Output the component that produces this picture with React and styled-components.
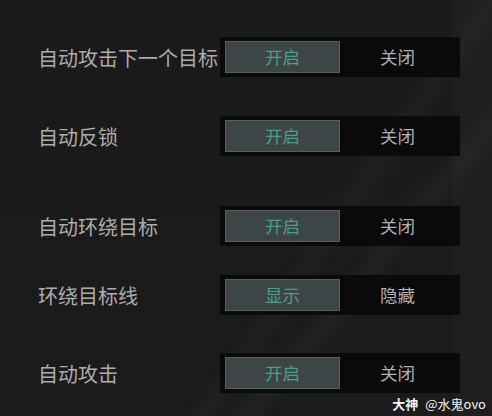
import styled, { createGlobalStyle } from "styled-components";

const GlobalStyle = createGlobalStyle`
  html, body {
    margin: 0;
    padding: 0;
    background: #1b1a1a;
  }
  body {
    font-family: "Noto Sans CJK SC", "Noto Sans", sans-serif;
  }
`;

const settings = [
  { label: "自动攻击下一个目标", on: "开启", off: "关闭", gap: 37 },
  { label: "自动反锁", on: "开启", off: "关闭", gap: 39 },
  { label: "自动环绕目标", on: "开启", off: "关闭", gap: 50 },
  { label: "环绕目标线", on: "显示", off: "隐藏", gap: 29 },
  { label: "自动攻击", on: "开启", off: "关闭", gap: 38 },
];

export default function App() {
  return (
    <Screen>
      <GlobalStyle />
      <List>
        {settings.map((s) => (
          <Row key={s.label} $gap={s.gap}>
            <Label>{s.label}</Label>
            <Toggle>
              <Option $active>{s.on}</Option>
              <Option>{s.off}</Option>
            </Toggle>
          </Row>
        ))}
      </List>
      <Watermark>
        <Brand>大神</Brand>
        <Author>@水鬼ovo</Author>
      </Watermark>
    </Screen>
  );
}

const Screen = styled.div`
  position: relative;
  width: 492px;
  height: 416px;
  overflow: hidden;
  background:
    linear-gradient(90deg, transparent 453px, rgba(255, 255, 255, 0.02) 453px),
    linear-gradient(125deg, transparent 60%, rgba(255, 255, 255, 0.025) 63%, transparent 66%),
    linear-gradient(130deg, transparent 68%, rgba(255, 255, 255, 0.03) 71%, transparent 74%),
    linear-gradient(180deg, #1a1a1a 0%, #1c1b1b 100%);
`;

const List = styled.div`
  display: flex;
  flex-direction: column;
`;

const Row = styled.div`
  display: flex;
  align-items: center;
  margin-top: ${(p) => p.$gap}px;
  padding-left: 38px;
`;

const Label = styled.div`
  width: 182px;
  font-size: 20px;
  color: #acacac;
  white-space: nowrap;
`;

const Toggle = styled.div`
  display: flex;
  align-items: center;
  width: 240px;
  height: 40px;
  box-sizing: border-box;
  padding: 0 5px 1px;
  background: #0a0a0a;
`;

const Option = styled.div`
  flex: 1;
  height: 32px;
  box-sizing: border-box;
  display: flex;
  align-items: center;
  justify-content: center;
  font-size: 17.5px;
  color: ${(p) => (p.$active ? "#4c9e88" : "#b0b0b0")};
  background: ${(p) => (p.$active ? "#3d4547" : "transparent")};
  border: 1px solid ${(p) => (p.$active ? "#58605f" : "transparent")};
`;

const Watermark = styled.div`
  position: absolute;
  right: 6px;
  bottom: 3px;
  display: flex;
  align-items: baseline;
  gap: 7px;
  color: #f2f2f2;
`;

const Brand = styled.span`
  font-size: 13px;
  font-weight: 700;
`;

const Author = styled.span`
  font-size: 13px;
  font-family: "Noto Sans CJK SC", "Liberation Sans", sans-serif;
`;
